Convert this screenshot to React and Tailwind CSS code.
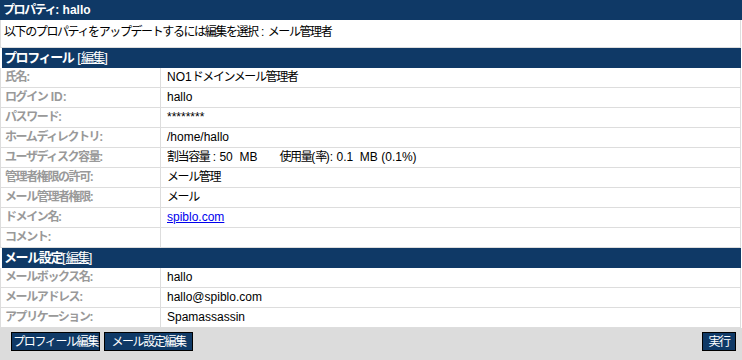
import React from "react";

// Japanese runs get tighter tracking so they sit at the reference's widths
const J = ({ children }) => <span className="tracking-[-1.4px]">{children}</span>;

const profileRows = [
  { label: <J>氏名:</J>, value: <><span>NO1</span><J>ドメインメール管理者</J></> },
  { label: <><J>ログイン</J> ID:</>, value: "hallo" },
  { label: <J>パスワード:</J>, value: "********" },
  { label: <J>ホームディレクトリ:</J>, value: "/home/hallo" },
  {
    label: <J>ユーザディスク容量:</J>,
    value: (
      <>
        <J>割当容量</J> : 50&nbsp; MB<span className="inline-block w-[22px]" />
        <J>使用量</J>(<J>率</J>): 0.1&nbsp; MB (0.1%)
      </>
    ),
  },
  { label: <J>管理者権限の許可:</J>, value: <J>メール管理</J> },
  { label: <J>メール管理者権限:</J>, value: <J>メール</J> },
  {
    label: <J>ドメイン名:</J>,
    value: (
      <a href="#" className="text-[#0000ee] underline">
        spiblo.com
      </a>
    ),
  },
  { label: <J>コメント:</J>, value: "" },
];

const mailRows = [
  { label: <J>メールボックス名:</J>, value: "hallo" },
  { label: <J>メールアドレス:</J>, value: "hallo@spiblo.com" },
  { label: <J>アプリケーション:</J>, value: "Spamassassin" },
];

const Row = ({ label, value }) => (
  <div className="flex h-[20px] border-b border-l border-r border-[#dddddd] bg-white">
    <div className="w-[160px] shrink-0 border-r border-[#dddddd] pl-[4px] leading-[19px] font-bold text-[#999999]">
      {label}
    </div>
    <div className="pl-[6px] leading-[19px] text-black">{value}</div>
  </div>
);

const SectionHeader = ({ title, gap }) => (
  <div className="ml-[2px] mr-[1px] h-[20px] bg-[#0f3966] pl-[2px] leading-[20px] font-bold text-[13px] text-white">
    <J>{title}</J>
    {gap && <span className="inline-block w-[4px]" />}
    <span className="font-normal">[</span>
    <a href="#" className="underline font-normal">
      <J>編集</J>
    </a>
    <span className="font-normal">]</span>
  </div>
);

const Button = ({ children, w }) => (
  <button
    className={`${w} h-[19px] border border-black bg-[#0f3966] text-[12px] leading-[16px] tracking-[-1.4px] text-white`}
  >
    {children}
  </button>
);

export default function App() {
  return (
    <div
      className="w-[742px] h-[360px] bg-white text-[12px]"
      style={{ fontFamily: '"Liberation Sans", Arial, "Noto Sans CJK JP", sans-serif' }}
    >
      <div className="h-[20px] bg-[#0f3966] pl-[3px] leading-[20px] font-bold text-[12px] text-white">
        <J>プロパティ</J>: hallo
      </div>
      <div className="mr-[1px] h-[28px] border-b border-l border-r border-[#dddddd] pl-[3px] leading-[24px] text-black">
        <J>以下のプロパティをアップデートするには編集を選択</J> : <J>メール管理者</J>
      </div>
      <SectionHeader title="プロフィール" gap />
      <div className="mr-[1px]">
        {profileRows.map((r, i) => (
          <Row key={i} label={r.label} value={r.value} />
        ))}
      </div>
      <SectionHeader title="メール設定" />
      <div className="mr-[1px]">
        {mailRows.map((r, i) => (
          <Row key={i} label={r.label} value={r.value} />
        ))}
      </div>
      <div className="flex h-[32px] items-start justify-between bg-[#dcdcdc] pl-[11px] pr-[6px] pt-[4px]">
        <div className="flex gap-[4px]">
          <Button w="w-[89px]">プロフィール編集</Button>
          <Button w="w-[89px]">メール設定編集</Button>
        </div>
        <Button w="w-[34px]">実行</Button>
      </div>
    </div>
  );
}
